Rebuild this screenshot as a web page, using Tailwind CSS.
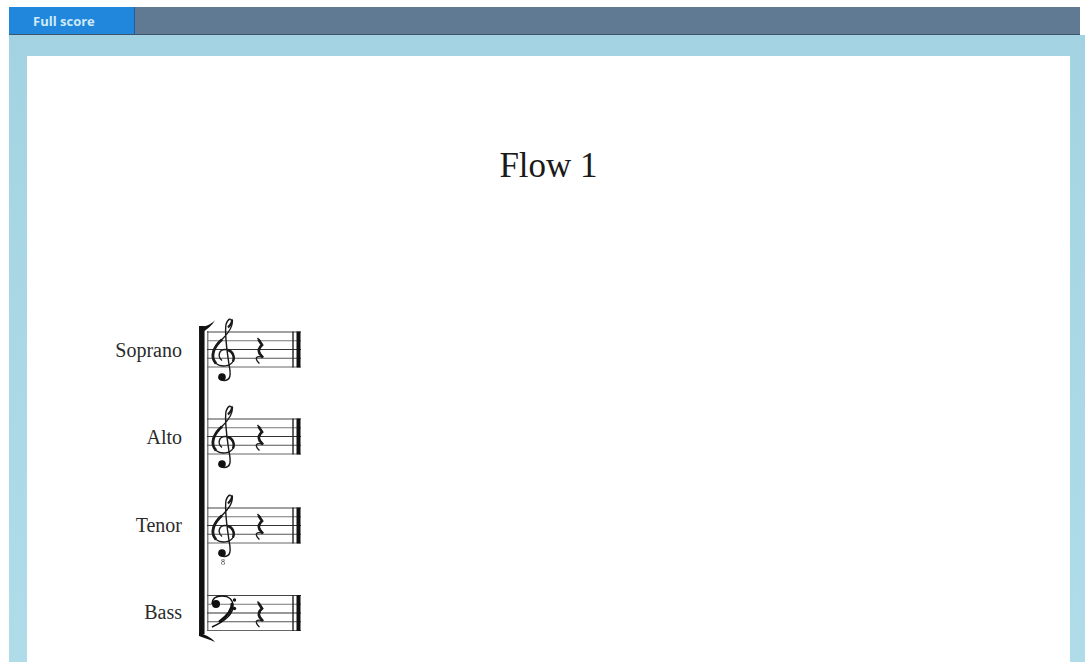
<!doctype html>
<html>
<head>
<meta charset="utf-8">
<script src="https://cdn.jsdelivr.net/npm/@tailwindcss/browser@4"></script>
</head>
<body class="bg-white">
<div class="h-[662px] w-[1087px] overflow-hidden flex flex-col pt-[7px] pl-[9px] pr-[2px] font-['Liberation_Serif',serif]">
  <div class="h-[28px] mr-[5px] flex shrink-0 bg-[#5f7a92] border-b border-[#3f5568]">
    <div class="w-[126px] bg-[#2087dc] border-r border-[#1c5f9c] pl-[24px] text-[13px] font-bold leading-[29px] text-[#cfeaf8] font-['Open_Sans',sans-serif]">Full score</div>
  </div>
  <div class="flex-1 bg-gradient-to-b from-[#a3d3e2] to-[#b0dcea] pt-[21px] pl-[18px] pr-[15px] flex flex-col">
    <div class="flex-1 bg-white">
      <div class="h-[250px] pt-[90px] text-center text-[35px] leading-[40px] text-[#1a1a1a]">Flow 1</div>
      <div class="flex">
        <div class="w-[155px] mr-[13px] flex flex-col text-right text-[20px] text-[#2b2b2b]">
          <div class="h-[87.4px] leading-[88px]">Soprano</div>
          <div class="h-[87.4px] leading-[88px]">Alto</div>
          <div class="h-[87.4px] leading-[88px]">Tenor</div>
          <div class="h-[87.4px] leading-[88px]">Bass</div>
        </div>
        <svg class="w-[115px] h-[350px] blur-[0.4px]" viewBox="195 306 115 350" fill="none">
          <defs>
            <g id="staff">
              <path d="M207 0.5H301" stroke="#444" stroke-width="1.2"/>
              <path d="M207 9.25H301" stroke="#777" stroke-width="1.2"/>
              <path d="M207 18H301" stroke="#333" stroke-width="1.2"/>
              <path d="M207 26.75H301" stroke="#555" stroke-width="1.2"/>
              <path d="M207 35.5H301" stroke="#666" stroke-width="1.2"/>
              <path d="M293 0V36" stroke="#222" stroke-width="1.4"/>
              <path d="M298.5 0V36" stroke="#111" stroke-width="4"/>
              <path d="M257.5 6.5 L262.5 13.5 C258.5 17 258 20 263 26 C258.5 24 255.5 25.5 256.5 28 C257 30 258.5 31 259.5 32" stroke="#1a1a1a" stroke-width="1.3"/>
              <path d="M258.5 8 L262 13.5 C259 16 258 19 259.5 22 L263 26" stroke="#1a1a1a" stroke-width="2.6"/>
            </g>
            <g id="treble">
              <path d="M222 29 C217 25 219 18 225 18 C232 18 236 25 233 30 C230 35 221 36 216 32 C209 25 214 15 222 8 C229 1 233 -5 232 -10 C231 -14 228 -13 226 -7 C225 -1 226 13 229 33 C231 43 231 49 224 49 C221 49 219 47 219 45" stroke="#1a1a1a" stroke-width="1.4"/>
              <path d="M216 32 C209.500 25 214 15 222 8" stroke="#1a1a1a" stroke-width="2.8"/>
              <path d="M233 30 C235 26 233 20 228 18.500" stroke="#1a1a1a" stroke-width="2.400"/>
              <path d="M228 -4 C232 -8 232.500 -11 231.500 -12" stroke="#1a1a1a" stroke-width="2.200"/>
              <circle cx="222" cy="45.500" r="3.800" fill="#111"/>
            </g>
          </defs>
          <!-- brace -->
          <path d="M201.800 326 V634" stroke="#111" stroke-width="5.500"/>
          <path d="M199 328 C205 326 211 325 215 320 C212 326 207 329 204.500 331 L199 331Z" fill="#111"/>
          <path d="M199 632 C205 635 211 637 215 642 C211 640 204 638 199 636Z" fill="#111"/>
          <path d="M207.800 331 V631" stroke="#666" stroke-width="1.200"/>
          <!-- staves -->
          <use href="#staff" transform="translate(0 331.500)"/>
          <use href="#treble" transform="translate(0 331.500)"/>
          <use href="#staff" transform="translate(0 418.500)"/>
          <use href="#treble" transform="translate(0 418.500)"/>
          <use href="#staff" transform="translate(0 507.500)"/>
          <use href="#treble" transform="translate(0 507.500)"/>
          <text x="223" y="565" font-size="8" font-family="Liberation Serif" fill="#333" text-anchor="middle">8</text>
          <use href="#staff" transform="translate(0 595)"/>
          <!-- bass clef -->
          <circle cx="216" cy="604" r="4" fill="#111"/>
          <path d="M212 604 C212 598 217 596 222 596 C229 596 233 600 233 606 C233 615 223 622 212 627" stroke="#111" stroke-width="1.500"/>
          <path d="M232 603 C232.500 611 226 617 219 622" stroke="#111" stroke-width="2.600"/>
          <circle cx="234.500" cy="600" r="1.700" fill="#111"/>
          <circle cx="234.500" cy="608.500" r="1.700" fill="#111"/>
        </svg>
      </div>
    </div>
  </div>
</div>
</body>
</html>
